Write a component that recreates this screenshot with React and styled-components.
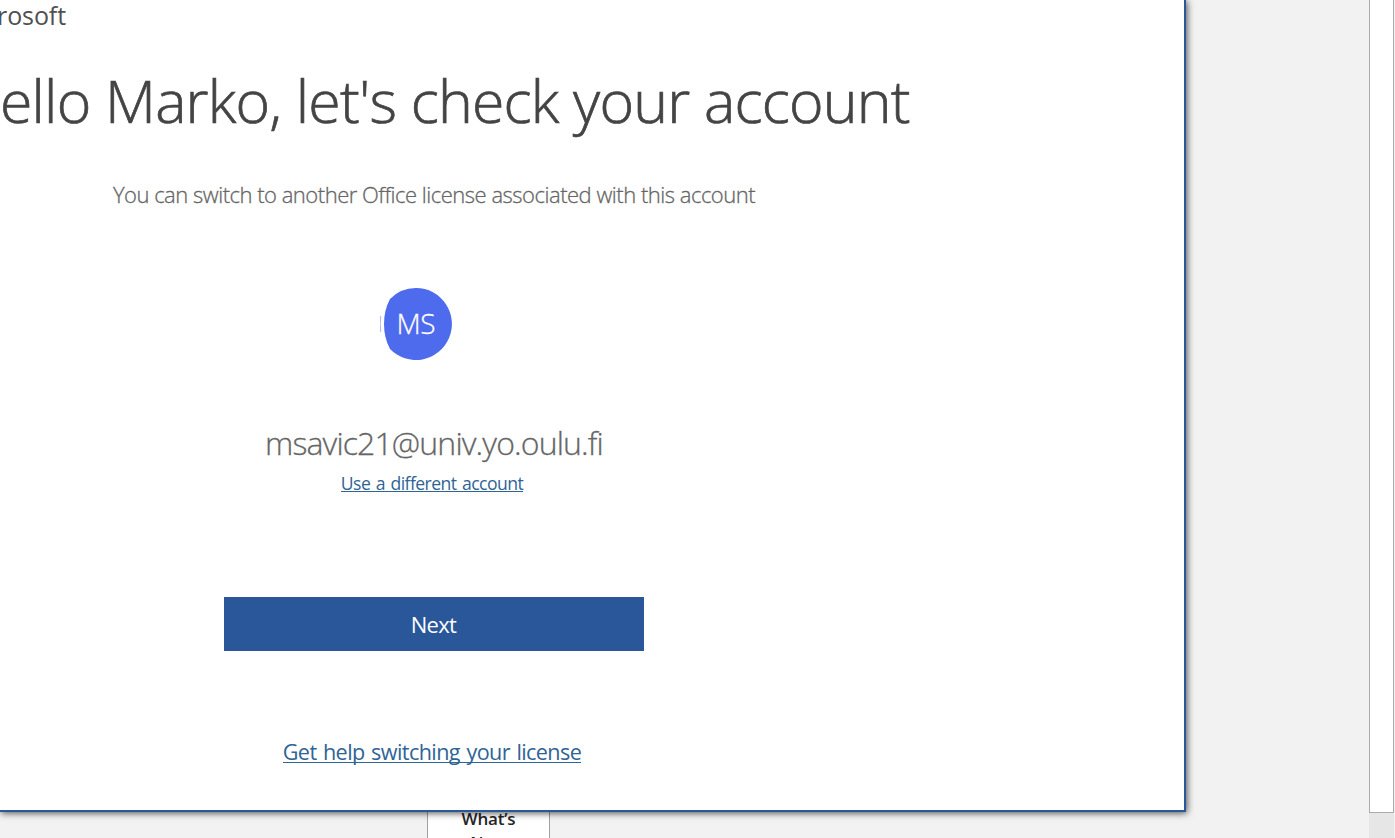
import React from "react";
import styled, { createGlobalStyle } from "styled-components";

const GlobalStyle = createGlobalStyle`
  * { box-sizing: border-box; }
  body { margin: 0; overflow: hidden; font-family: "Open Sans", "Noto Sans", sans-serif; }
`;

const Page = styled.div`
  display: flex;
  width: 1395px;
  height: 838px;
  overflow: hidden;
  background: #f2f2f2;
`;

const Workspace = styled.main`
  flex: 1;
  min-width: 0;
`;

const Dialog = styled.section`
  position: relative;
  z-index: 1;
  width: 1186px;
  height: 812px;
  border: solid #2a579a;
  border-width: 0 2px 2px 0;
  background: #fff;
  box-shadow: 1px 1px 7px rgba(0, 0, 0, 0.7);
`;

const Content = styled.div`
  display: flex;
  flex-direction: column;
  align-items: center;
  width: 868px;
`;

const Line = styled.div`
  display: flex;
  justify-content: center;
  height: ${(p) => p.$height}px;
  margin: ${(p) => p.$top || 0}px 0 0;
  font-size: ${(p) => p.$size}px;
  line-height: ${(p) => p.$height}px;
  letter-spacing: ${(p) => p.$track || 0}px;
  white-space: nowrap;
`;

const Brand = styled(Line)`
  align-self: flex-start;
  justify-content: flex-end;
  width: 66px;
  font-weight: 500;
  color: #505050;
`;

const Title = styled(Line).attrs({ as: "h1" })`
  font-weight: 300;
  -webkit-text-stroke: 0.7px #444;
  color: #444;
`;

const Note = styled(Line).attrs({ as: "p" })`
  font-weight: 300;
  -webkit-text-stroke: 0.3px #666;
  color: #666;
`;

const Avatar = styled.svg`
  display: block;
  width: 72px;
  height: 72px;
  margin: 79px 36px 0 0;
`;

const Link = styled.a`
  height: ${(p) => p.$height}px;
  margin: ${(p) => p.$top}px 4px 0 0;
  border-bottom: 1px solid #2f6496;
  font-size: ${(p) => p.$size}px;
  line-height: ${(p) => p.$line}px;
  letter-spacing: ${(p) => p.$track}px;
  word-spacing: 1.5px;
  white-space: nowrap;
  color: #2f6496;
`;

const NextButton = styled.button`
  width: 420px;
  height: 54px;
  margin-top: 105px;
  padding: 0 1px 0 0;
  border: 0;
  background: #2a579a;
  font: 400 22px/52px "Open Sans", "Noto Sans", sans-serif;
  letter-spacing: -0.7px;
  color: #fff;
`;

const NewsCard = styled.div`
  width: 123px;
  height: 60px;
  margin-left: 427px;
  border: solid #a0a0a0;
  border-width: 0 1px;
  background: #fff;
  font-size: 17px;
  font-weight: 600;
  line-height: 24px;
  letter-spacing: -0.2px;
  text-align: center;
  color: #262626;
`;

const NewsText = styled.div`
  margin-top: -5px;
`;

const SidePane = styled.aside`
  width: 25px;
  margin-right: 1px;
  background: #e6e6e6;
`;

const SideTrack = styled.div`
  height: 813px;
  border: solid #ababab;
  border-width: 0 1px 1px;
  background: #fff;
`;

export default function App() {
  return (
    <>
      <GlobalStyle />
      <Page>
        <Workspace>
          <Dialog>
            <Content>
              <Brand $height={30} $size={25} $track={-0.1}><span>Microsoft</span></Brand>
              <Title $height={80} $top={30} $size={59} $track={-0.79}><span>Hello Marko, let's check your account</span></Title>
              <Note $height={30} $top={39} $size={22} $track={-0.49}><span>You can switch to another Office license associated with this account</span></Note>
              <Avatar viewBox="0 0 72 72">
                <path d="M36 0A36 36 0 1 1 10 61Q4 50 4 36Q4 22 10 11A36 36 0 0 1 36 0Z" fill="#4f6bed" />
                <path d="M.8 28Q-.4 36 .8 44" fill="none" stroke="#a7b5f6" strokeWidth="1" />
                <text x="36" y="46" textAnchor="middle" fontSize="28" fontWeight="300" textLength="39" stroke="#fff" strokeWidth=".3" fill="#fff">MS</text>
              </Avatar>
              <Note $height={44} $top={61} $size={32} $track={-0.87}><span>msavic21@univ.yo.oulu.fi</span></Note>
              <Link $height={22} $top={5} $size={17.6} $line={26} $track={-0.56}>Use a different account</Link>
              <NextButton>Next</NextButton>
              <Link $height={28} $top={84} $size={21.6} $line={33} $track={-0.6}>Get help switching your license</Link>
            </Content>
          </Dialog>
          <NewsCard>
            <NewsText>What’s<br />New</NewsText>
          </NewsCard>
        </Workspace>
        <SidePane><SideTrack /></SidePane>
      </Page>
    </>
  );
}
